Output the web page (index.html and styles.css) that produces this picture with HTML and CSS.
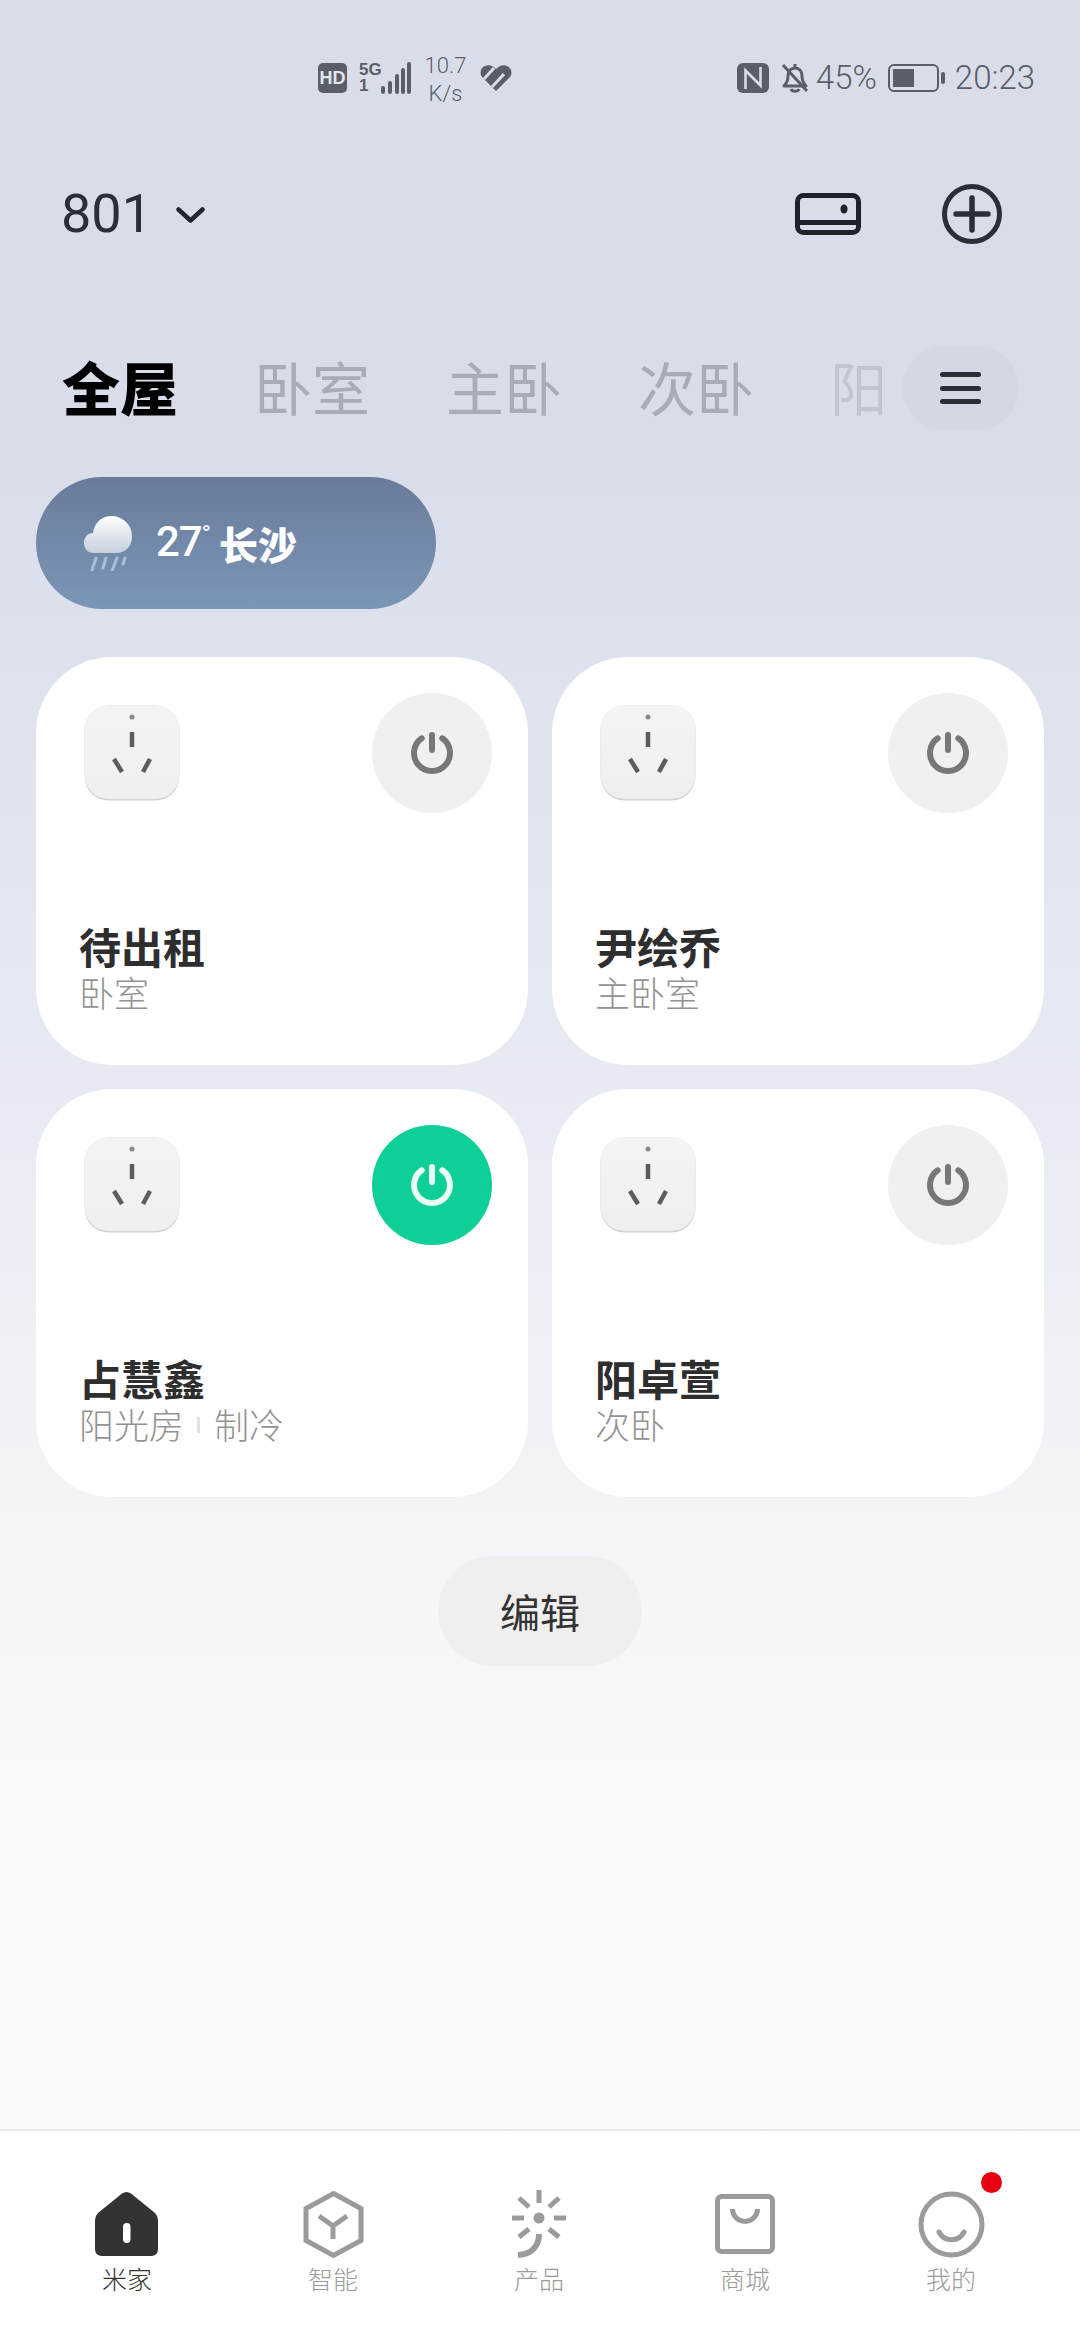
FILE: index.html
```html
<!DOCTYPE html>
<html lang="zh-CN">
<head>
<meta charset="utf-8">
<title>米家</title>
<link rel="stylesheet" href="styles.css">
</head>
<body>
<svg class="defs" width="0" height="0" aria-hidden="true">
  <defs>
    <linearGradient id="plugbg" x1="0" y1="0" x2="0" y2="1"><stop offset="0" stop-color="#f3f4f4"/><stop offset="1" stop-color="#eeefef"/></linearGradient>
    <linearGradient id="cloudbg" x1="0" y1="0" x2="0" y2="1"><stop offset="0" stop-color="#ffffff"/><stop offset="1" stop-color="#c6d0dc"/></linearGradient>
    <symbol id="plug" viewBox="0 0 96 96">
      <rect x="0.5" y="0.5" width="95" height="95" rx="24" fill="#cfd1d3"/>
      <rect x="0.5" y="0.5" width="95" height="93.5" rx="24" fill="url(#plugbg)"/>
      <circle cx="48" cy="12" r="2.5" fill="#8a8a8a"/>
      <path d="M48 27V42M30 54L38 67M66 54L59 67" stroke="#5c5c5c" stroke-width="4.5" fill="none"/>
    </symbol>
    <symbol id="power" viewBox="0 0 120 120">
      <path d="M49.7 45.3A18 18 0 1 0 70.3 45.3" fill="none" stroke="currentColor" stroke-width="6" stroke-linecap="round"/>
      <path d="M60 42V57" fill="none" stroke="currentColor" stroke-width="6" stroke-linecap="round"/>
    </symbol>
  </defs>
</svg>
<div class="page">
  <header class="status">
    <div class="status-group status-left">
      <span class="hd">HD</span>
      <div class="signal">
        <div class="signal-labels"><span>5G</span><span>1</span></div>
        <svg width="30" height="32" viewBox="0 0 30 32"><path d="M2 26V30M9 21V30M16 14V30M22 8V30M28 2V30" stroke="#5a5e69" stroke-width="4" fill="none" stroke-linecap="round"/></svg>
      </div>
      <div class="speed"><span>10.7</span><span>K/s</span></div>
      <svg width="32" height="26" viewBox="0 0 32 26"><path d="M16 26L3 13C-1 9 0 3 5 1C9-1 13 1 16 4C19 1 23-1 27 1C32 3 33 9 29 13Z" fill="#5a5e69"/><path d="M4 14L14 3M12 22L24 9" stroke="#d9ddea" stroke-width="3" fill="none"/></svg>
    </div>
    <div class="status-group status-right">
      <svg width="32" height="30" viewBox="0 0 32 30"><rect width="32" height="30" rx="6" fill="#5a5e69"/><path d="M8.5 26V7.5L23.5 22.5V4" fill="none" stroke="#d9ddea" stroke-width="2.6"/></svg>
      <svg width="30" height="30" viewBox="0 0 30 30"><path d="M4 23C7 20 8 17 8 13C8 8 11 5 15 5C19 5 22 8 22 13C22 17 23 20 26 23Z" fill="none" stroke="#5a5e69" stroke-width="3" stroke-linejoin="round"/><path d="M15 1V5M11 26C12 29 18 29 19 26M3 2L27 28" fill="none" stroke="#5a5e69" stroke-width="3"/></svg>
      <span class="status-text pct">45%</span>
      <svg class="battery" width="57" height="28" viewBox="0 0 57 28"><rect x="1" y="1" width="49" height="26" rx="5" fill="none" stroke="#5a5e69" stroke-width="2"/><rect x="5" y="5" width="21" height="18" fill="#5a5e69"/><rect x="53" y="8" width="4" height="12" rx="2" fill="#5a5e69"/></svg>
      <span class="status-text">20:23</span>
    </div>
  </header>

  <section class="topbar">
    <div class="home-name">
      <span>801</span>
      <svg width="29" height="16" viewBox="0 0 29 16"><path d="M2.5 2.5L14.5 13.5L26.5 2.5" fill="none" stroke="#23262e" stroke-width="4.5" stroke-linecap="round" stroke-linejoin="round"/></svg>
    </div>
    <div class="top-actions">
      <svg width="66" height="42" viewBox="0 0 66 42"><rect x="2.5" y="2.5" width="61" height="37" rx="6" fill="none" stroke="#1f2229" stroke-width="5"/><path d="M3 29.5H63" stroke="#1f2229" stroke-width="5"/><ellipse cx="49" cy="16" rx="3.6" ry="4.6" fill="#1f2229"/></svg>
      <svg width="60" height="60" viewBox="0 0 60 60"><circle cx="30" cy="30" r="27.5" fill="none" stroke="#2b2e37" stroke-width="5"/><path d="M14 30H46M30 14V46" stroke="#2b2e37" stroke-width="5.5" stroke-linecap="round"/></svg>
    </div>
  </section>

  <nav class="tabs">
    <span class="tab tab-active">全屋</span>
    <span class="tab">卧室</span>
    <span class="tab">主卧</span>
    <span class="tab">次卧</span>
    <span class="tab tab-fade">阳</span>
    <button class="menu" type="button" aria-label="菜单"><i></i><i></i><i></i></button>
  </nav>

  <main class="content">
    <div class="weather">
      <svg width="48" height="56" viewBox="0 0 48 56"><path d="M10 38C3 38 0 33 0 28C0 22 4 18 9 18C10 8 18 1 27 1C38 1 48 9 48 21C48 31 42 38 32 38Z" fill="url(#cloudbg)"/><path d="M8 55L12 43M19 53L22 43M28 56L33 43M39 49L41 43" stroke="#a8c0dc" stroke-width="3" stroke-linecap="round" fill="none"/></svg>
      <span class="temp">27<sup>°</sup></span>
      <span class="city">长沙</span>
    </div>

    <div class="cards">
      <article class="card">
        <div class="card-top">
          <svg class="plug"><use href="#plug"/></svg>
          <span class="power"><svg><use href="#power"/></svg></span>
        </div>
        <h2 class="card-title">待出租</h2>
        <p class="card-sub">卧室</p>
      </article>
      <article class="card">
        <div class="card-top">
          <svg class="plug"><use href="#plug"/></svg>
          <span class="power"><svg><use href="#power"/></svg></span>
        </div>
        <h2 class="card-title">尹绘乔</h2>
        <p class="card-sub">主卧室</p>
      </article>
      <article class="card">
        <div class="card-top">
          <svg class="plug"><use href="#plug"/></svg>
          <span class="power power-on"><svg><use href="#power"/></svg></span>
        </div>
        <h2 class="card-title">占慧鑫</h2>
        <p class="card-sub">阳光房<i class="sep"></i>制冷</p>
      </article>
      <article class="card">
        <div class="card-top">
          <svg class="plug"><use href="#plug"/></svg>
          <span class="power"><svg><use href="#power"/></svg></span>
        </div>
        <h2 class="card-title">阳卓萱</h2>
        <p class="card-sub">次卧</p>
      </article>
    </div>

    <button class="edit" type="button">编辑</button>
  </main>

  <footer class="tabbar">
    <div class="bar-item bar-active">
      <svg width="72" height="72" viewBox="0 0 72 72"><path d="M31 5.5Q35.5 2.5 40 5.5L64 25Q67 28 67 32V61Q67 68 60 68H11Q4 68 4 61V32Q4 28 7 25Z" fill="#333"/><rect x="32" y="35" width="7.5" height="20" rx="3.7" fill="#fff"/></svg>
      <span>米家</span>
    </div>
    <div class="bar-item">
      <svg width="72" height="72" viewBox="0 0 72 72"><path d="M36.5 5.5L64 20.5V52.5L36.5 67.5L9 52.5V20.5Z" fill="none" stroke="#9b9b9b" stroke-width="5"/><path d="M22 28L36 38L50 28M36 38V51" fill="none" stroke="#9b9b9b" stroke-width="5"/></svg>
      <span>智能</span>
    </div>
    <div class="bar-item">
      <svg width="72" height="72" viewBox="0 0 72 72"><circle cx="36" cy="30" r="5.5" fill="#9b9b9b"/><path d="M36 2V15M9 30H21M51 30H63M16 10L26 19M56 10L46 19M16 49L26 41M56 49L46 41" stroke="#9b9b9b" stroke-width="5" fill="none"/><path d="M36 46C36 58 29 66 15 67" stroke="#9b9b9b" stroke-width="6" fill="none"/></svg>
      <span>产品</span>
    </div>
    <div class="bar-item">
      <svg width="72" height="72" viewBox="0 0 72 72"><rect x="8.5" y="8.5" width="55" height="55" rx="4" fill="none" stroke="#9b9b9b" stroke-width="5"/><path d="M23.5 21A12.5 12.5 0 0 0 48.5 21" fill="none" stroke="#9b9b9b" stroke-width="5"/></svg>
      <span>商城</span>
    </div>
    <div class="bar-item">
      <svg width="72" height="72" viewBox="0 0 72 72"><circle cx="36.5" cy="36.5" r="30.5" fill="none" stroke="#9b9b9b" stroke-width="5"/><path d="M24 44A14 14 0 0 0 49 44" fill="none" stroke="#9b9b9b" stroke-width="5" stroke-linecap="round"/></svg>
      <span>我的</span>
      <b class="badge"></b>
    </div>
  </footer>
</div>
</body>
</html>
```

FILE: styles.css
```css
* { box-sizing: border-box; }
html, body { margin: 0; padding: 0; }
body { font-family: Roboto, "Noto Sans CJK SC", sans-serif; }
.defs { position: absolute; }

.page {
  width: 1080px;
  height: 2340px;
  display: flex;
  flex-direction: column;
  overflow: hidden;
  background: linear-gradient(180deg, #d9ddea 0, #d9ddea 440px, #dfe3ee 700px, #e7eaf3 1080px, #f1f3f7 1450px, #f7f8f9 1700px, #fbfbfc 2130px);
}

/* status bar */
.status {
  height: 122px;
  padding: 34px 45px 0 318px;
  display: flex;
  align-items: center;
  justify-content: space-between;
  color: #5a5e69;
}
.status-group { display: flex; align-items: center; }
.status-left { gap: 12px; }
.hd {
  width: 29px;
  height: 30px;
  border-radius: 5px;
  background: #5a5e69;
  color: #e4e6ef;
  font: 700 18px/30px "Liberation Sans Narrow", "Liberation Sans", sans-serif;
  text-align: center;
}
.signal { display: flex; align-items: flex-end; gap: 7px; width: 52px; }
.signal-labels {
  display: flex;
  flex-direction: column;
  width: 15px;
  font: 700 17px/16px "Liberation Sans Narrow", "Liberation Sans", sans-serif;
}
.speed {
  display: flex;
  flex-direction: column;
  align-items: center;
  width: 45px;
  padding-top: 3px;
  font: 300 22px/28px Roboto, sans-serif;
}
.status-right svg:nth-child(2) { margin-left: 11px; }
.status-text { font: 300 33px/40px Roboto, sans-serif; }
.pct { margin-left: 6px; margin-right: 10px; width: 62px; }
.battery { margin-right: 10px; }

/* top bar */
.topbar {
  height: 184px;
  padding: 0 78px 0 61px;
  display: flex;
  align-items: center;
  justify-content: space-between;
}
.home-name {
  display: flex;
  align-items: center;
  gap: 24px;
  font: 400 54px/60px Roboto, sans-serif;
  color: #2b2e37;
}
.home-name svg { margin-top: 2px; }
.top-actions { display: flex; align-items: center; gap: 81px; }

/* tabs */
.tabs {
  position: relative;
  height: 82px;
  margin-top: 41px;
  margin-bottom: 48px;
  padding: 0 198px 0 62px;
  display: flex;
  align-items: flex-start;
  gap: 76px;
}
.tab {
  flex: none;
  font: 400 58px/78px "Noto Sans CJK SC", sans-serif;
  color: #a9acb7;
}
.tab-active { font-weight: 900; color: #000; }
.tab-fade { color: #c1c5cf; }
.tabs::after {
  content: "";
  position: absolute;
  left: 882px;
  top: 0;
  bottom: 0;
  width: 198px;
  background: #d9ddea;
}
.menu {
  position: absolute;
  z-index: 1;
  left: 902px;
  top: 0;
  width: 117px;
  height: 82px;
  padding: 0;
  border: 0;
  border-radius: 41px;
  background: #d3d8e4;
  display: flex;
  flex-direction: column;
  align-items: center;
  justify-content: center;
  gap: 8.5px;
}
.menu i { display: block; width: 41px; height: 5px; border-radius: 3px; background: #2b2e37; }

/* content */
.content { padding: 0 36px; display: flex; flex-direction: column; }
.weather {
  width: 400px;
  height: 132px;
  padding-left: 48px;
  border-radius: 66px;
  background: linear-gradient(180deg, #6a7b9a 0, #7b96b7 100%);
  display: flex;
  align-items: center;
  color: #fff;
}
.temp { margin-left: 24px; margin-top: -3px; font: 500 42px/50px Roboto, sans-serif; letter-spacing: -1px; }
.temp sup { font-size: 24px; line-height: 0; vertical-align: 14px; }
.city { margin-left: 9px; font: 900 39px/50px "Noto Sans CJK SC", sans-serif; }

.cards { margin-top: 48px; display: grid; grid-template-columns: 492px 492px; grid-auto-rows: 408px; gap: 24px; }
.card { padding: 36px 36px 0 43px; border-radius: 76px; background: #fff; }
.card-top { height: 120px; display: flex; justify-content: space-between; align-items: flex-start; }
.plug { width: 96px; height: 96px; margin: 12px 0 0 5px; }
.power { width: 120px; height: 120px; border-radius: 50%; background: #f0f0f0; color: #777; }
.power svg { display: block; width: 120px; height: 120px; }
.power-on { background: #0fcf98; color: #e8fbf5; }
.card-title { margin: 110px 0 0; font: 700 42px/46px "Noto Sans CJK SC", sans-serif; color: #2e2e2e; }
.card-sub { margin: 1px 0 0; display: flex; align-items: center; font: 300 35px/44px "Noto Sans CJK SC", sans-serif; color: #939393; }
.sep { width: 3px; height: 16px; margin: 2px 14px 0 13px; background: #e2e2e2; }

.edit {
  align-self: center;
  width: 204px;
  height: 110px;
  margin-top: 59px;
  padding: 0;
  border: 0;
  border-radius: 55px;
  background: #efefef;
  color: #333;
  font: 400 40px/110px "Noto Sans CJK SC", sans-serif;
}

/* bottom bar */
.tabbar {
  margin-top: auto;
  height: 211px;
  padding: 57px 26px 0 24px;
  display: grid;
  grid-template-columns: repeat(5, 206px);
  background: #fff;
  border-top: 2px solid #e8e8e8;
}
.bar-item {
  position: relative;
  display: flex;
  flex-direction: column;
  align-items: center;
  color: #9b9b9b;
  font: 300 25px/30px "Noto Sans CJK SC", sans-serif;
}
.bar-item span { margin-top: 3px; }
.bar-active { color: #333; }
.badge {
  position: absolute;
  left: 133px;
  top: -16px;
  width: 21px;
  height: 21px;
  border-radius: 50%;
  background: #e60012;
}
```
